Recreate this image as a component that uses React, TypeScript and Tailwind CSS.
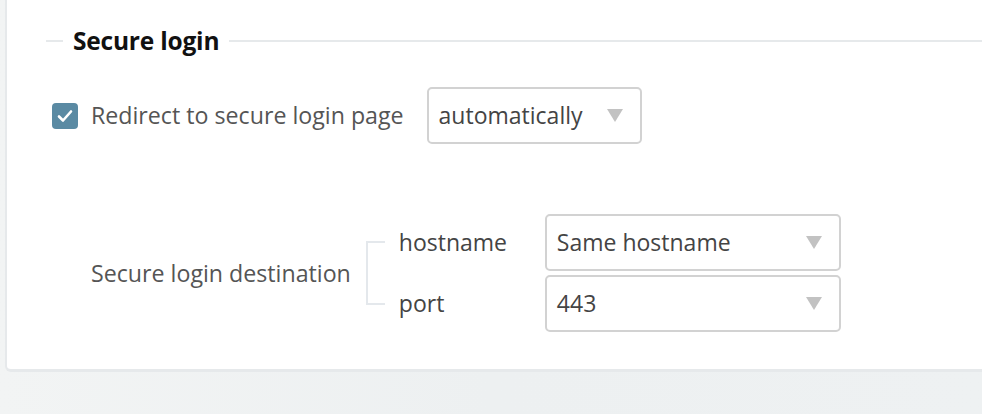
import { useState } from 'react'

const font = { fontFamily: '"Open Sans", Lato, sans-serif' }

function Caret() {
  return (
    <svg width="16" height="13" viewBox="0 0 16 13" className="shrink-0">
      <path d="M0 0 H16 L8 13 Z" fill="#c2c2c2" />
    </svg>
  )
}

function SelectBox({ value, width, height }: { value: string; width: string; height: string }) {
  return (
    <div
      className={`flex items-center justify-between border-2 border-[#d2d2d2] rounded-[5px] bg-white pl-[10px] pr-[17px] text-[23px] text-[#444] ${width} ${height}`}
    >
      <span>{value}</span>
      <Caret />
    </div>
  )
}

export default function App() {
  const [redirect, setRedirect] = useState(true)

  return (
    <div className="h-[414px] w-[982px] overflow-hidden bg-gradient-to-r from-[#f2f4f4] via-[#edf0f1] to-[#eef1f2] pl-[5px]" style={font}>
      <div className="h-[372px] bg-white border-l-2 border-b-[3px] border-[#e6e9eb] rounded-bl-[6px]">
        {/* legend */}
        <div className="flex items-center pt-[26px] pl-[39px]">
          <div className="h-[2px] w-[17px] bg-[#e6e9eb]" />
          <h2 className="px-[10px] text-[24.5px] font-bold text-[#111] leading-[30px] tracking-[-0.2px]">Secure login</h2>
          <div className="h-[2px] flex-1 bg-[#e6e9eb]" />
        </div>

        {/* redirect row */}
        <div className="flex items-center mt-[31px] pl-[45px]">
          <button
            onClick={() => setRedirect(!redirect)}
            className={`flex items-center justify-center w-[26px] h-[26px] rounded-[4px] ${redirect ? 'bg-[#5a8aa3]' : 'bg-white border-2 border-[#ccc]'}`}
          >
            {redirect && (
              <svg width="16" height="14" viewBox="0 0 16 14">
                <path d="M2 7.5 L6 11.5 L14 2.5" fill="none" stroke="#fff" strokeWidth="2.6" strokeLinecap="round" strokeLinejoin="round" />
              </svg>
            )}
          </button>
          <span className="ml-[13px] text-[23.2px] text-[#555]">Redirect to secure login page</span>
          <div className="ml-[23px]">
            <SelectBox value="automatically" width="w-[215px]" height="h-[57px]" />
          </div>
        </div>

        {/* destination */}
        <div className="flex items-center mt-[70px] pl-[84px]">
          <span className="text-[23.2px] text-[#555]">Secure login destination</span>
          <div className="ml-[15px] w-[19px] h-[64px] border-2 border-r-0 border-[#e4e8ec]" />
          <div className="ml-[14px] flex flex-col gap-[4px]">
            <div className="flex items-center">
              <span className="w-[146px] text-[23px] text-[#444]">hostname</span>
              <SelectBox value="Same hostname" width="w-[296px]" height="h-[57px]" />
            </div>
            <div className="flex items-center">
              <span className="w-[146px] text-[23px] text-[#444]">port</span>
              <SelectBox value="443" width="w-[296px]" height="h-[57px]" />
            </div>
          </div>
        </div>
      </div>
    </div>
  )
}
